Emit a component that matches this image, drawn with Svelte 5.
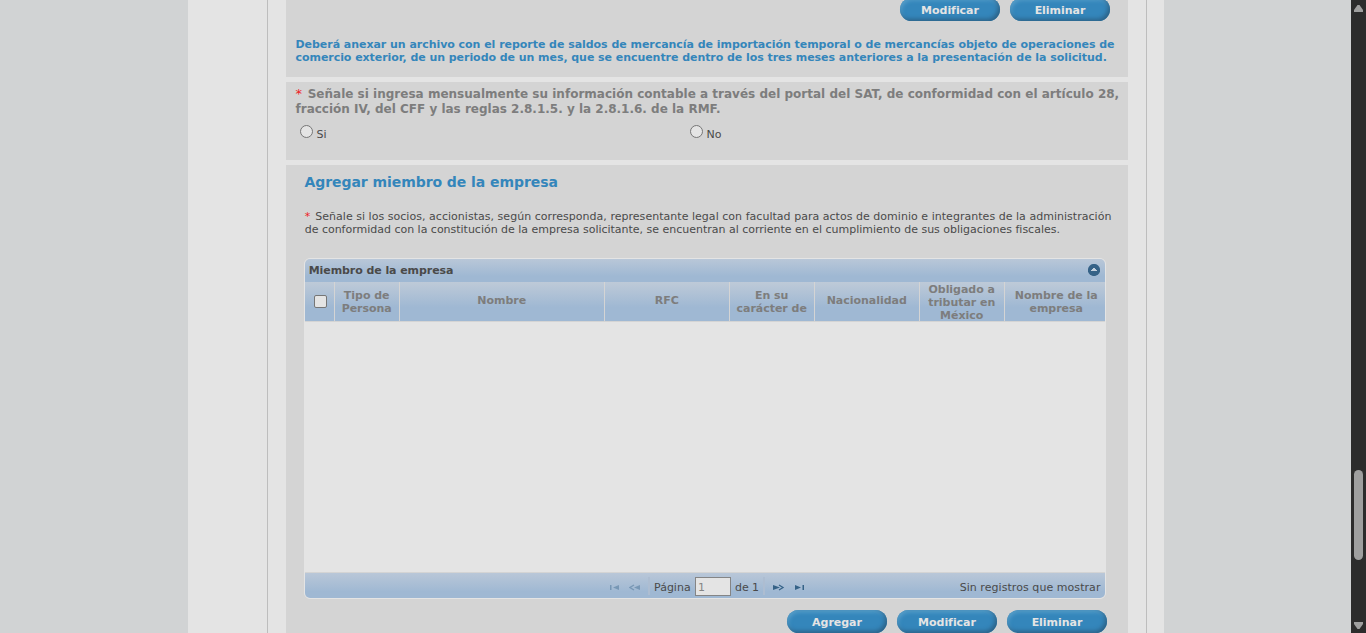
<script>
  const columns = [
    { width: 65, lines: ['Tipo de', 'Persona'] },
    { width: 205, lines: ['Nombre'] },
    { width: 125, lines: ['RFC'] },
    { width: 85, lines: ['En su', 'carácter de'] },
    { width: 105, lines: ['Nacionalidad'] },
    { width: 85, lines: ['Obligado a', 'tributar en', 'México'] },
    { width: 101, lines: ['Nombre de la', 'empresa'] }
  ];
  let choice = $state('');
  let pageNumber = $state('1');
</script>

<div class="screen">
  <div class="sheet">
    <main>
      <section class="panel report">
        <div class="actions">
          <button>Modificar</button>
          <button>Eliminar</button>
        </div>
        <p class="note">
          <span class="n1">Deberá anexar un archivo con el reporte de saldos de mercancía de importación temporal o de mercancías objeto de operaciones de</span>
          <span class="n2">comercio exterior, de un periodo de un mes, que se encuentre dentro de los tres meses anteriores a la presentación de la solicitud.</span>
        </p>
      </section>

      <section class="panel question">
        <p class="ask">
          <span class="q1"><i>*</i> Señale si ingresa mensualmente su información contable a través del portal del SAT, de conformidad con el artículo 28,</span>
          <span class="q2">fracción IV, del CFF y las reglas 2.8.1.5. y la 2.8.1.6. de la RMF.</span>
        </p>
        <div class="options">
          <label><input type="radio" name="sat" value="si" bind:group={choice} /><span>Si</span></label>
          <label><input type="radio" name="sat" value="no" bind:group={choice} /><span>No</span></label>
        </div>
      </section>

      <section class="panel members">
        <h2>Agregar miembro de la empresa</h2>
        <p class="intro">
          <span class="i1"><i>*</i> Señale si los socios, accionistas, según corresponda, representante legal con facultad para actos de dominio e integrantes de la administración</span>
          <span class="i2">de conformidad con la constitución de la empresa solicitante, se encuentran al corriente en el cumplimiento de sus obligaciones fiscales.</span>
        </p>
        <div class="grid">
          <div class="caption">
            <span>Miembro de la empresa</span>
            <svg width="12" height="12" viewBox="0 0 12 12"><circle cx="6" cy="6" r="6.1" fill="#356287" /><path d="M3 7h6v-1h-1v-1h-1v-1h-2v1h-1v1h-1z" fill="#c3d0dd" /></svg>
          </div>
          <div class="head">
            <div class="cell check"><input type="checkbox" /></div>
            {#each columns as col}
              <div class="cell" class:single={col.lines.length === 1} class:triple={col.lines.length === 3} style:width="{col.width}px">
                {#each col.lines as line}<span>{line}</span>{/each}
              </div>
            {/each}
          </div>
          <div class="rows"></div>
          <div class="pager">
            <div class="nav">
              <svg class="off" width="10" height="7" viewBox="0 0 10 7"><path d="M0 1h1.5v5h-1.5zM9 1v5L3 3.5z" /></svg>
              <svg class="off second" width="12" height="7" viewBox="0 0 12 7"><path d="M11 1v5L5 3.5z" /><path d="M5 1L1 3.5L5 6" class="line" /></svg>
              <b></b>
              <span class="word">Página</span>
              <input type="text" bind:value={pageNumber} />
              <span class="of">de 1</span>
              <b class="after"></b>
              <svg class="next" width="12" height="7" viewBox="0 0 12 7"><path d="M0 1v5L7 3.5z" /><path d="M6 1L10 3.5L6 6" class="line" /></svg>
              <svg class="last" width="10" height="7" viewBox="0 0 10 7"><path d="M0 1v5L6 3.5zM7.5 1h1.5v5h-1.5z" /></svg>
            </div>
            <span class="empty">Sin registros que mostrar</span>
          </div>
        </div>
        <div class="actions lower">
          <button>Agregar</button>
          <button>Modificar</button>
          <button>Eliminar</button>
        </div>
      </section>
    </main>
  </div>
  <div class="scroll">
    <svg width="9" height="7" viewBox="0 0 9 7"><path d="M3.5 0h2L9 5v2H0V5z" /></svg>
    <div class="thumb"></div>
    <svg width="9" height="7" viewBox="0 0 9 7"><path d="M0 0h9v2L5.5 7h-2L0 2z" /></svg>
  </div>
</div>

<style>
  :global(body) { margin: 0; overflow: hidden; }
  .screen {
    display: flex; width: 1366px; height: 633px; overflow: hidden; box-sizing: border-box;
    padding-left: 188px; background: #d1d3d4; color: #4a4a4a;
    font: 11px/13px Verdana, "DejaVu Sans", sans-serif;
  }
  .sheet { width: 976px; padding: 0 17px 0 79px; box-sizing: border-box; background: #e4e4e4; flex: none; }
  main { display: flex; flex-direction: column; gap: 5px; height: 633px; box-sizing: border-box; padding: 0 18px; border: solid #bdbdbd; border-width: 0 1px; }
  .panel { background: #d4d4d4; box-sizing: border-box; width: 842px; flex: none; overflow: hidden; }
  p, h2 { margin: 0; }
  p span { display: block; white-space: nowrap; }
  i { color: #ee1c25; font-style: normal; }
  .report { height: 77px; }
  .actions { display: flex; justify-content: flex-end; gap: 10px; margin: -2px 18px 0 0; }
  button {
    width: 100px; height: 23px; border: 0; padding: 2px 0 0; border-radius: 12px; color: #e4e4e4;
    font: bold 11px/21px Verdana, "DejaVu Sans", sans-serif; letter-spacing: -0.03px;
    background: #3486bb;
    box-shadow: inset -2px -2px 4px #2b6186, inset 1px 2px 4px #5da3cd;
  }
  .note { padding: 17px 0 0 9.5px; color: #3486bb; font-weight: bold; }
  .n1 { letter-spacing: -0.04px; }
  .n2 { letter-spacing: -0.052px; }
  .question { height: 78px; padding: 5px 0 0 9.5px; }
  .ask { font-size: 12px; line-height: 15px; font-weight: bold; color: #7d7d7d; }
  .q1 { letter-spacing: 0.01px; }
  .ask i { font-weight: normal; margin-right: 1.5px; font-size: 13px; line-height: 0; }
  .options { display: flex; padding: 8px 0 0 4.5px; }
  label { display: flex; width: 390px; }
  label span { padding: 3px 0 0 3.5px; }
  input[type='radio'] { appearance: none; width: 13px; height: 13px; margin: 0; border: 1px solid #767676; border-radius: 50%; background: #e4e4e4; box-sizing: border-box; }
  .members { height: 468px; padding-left: 18px; }
  h2 { font-size: 14px; line-height: 18px; padding: 8px 0 0 0.5px; color: #3486bb; white-space: nowrap; letter-spacing: -0.065px; }
  .intro { padding: 19px 0 0 0.7px; }
  .intro i { margin-right: 1.5px; }
  .i1 { letter-spacing: 0.031px; }
  .i2 { letter-spacing: -0.013px; }
  .grid { width: 802px; height: 341px; margin-top: 22px; box-sizing: border-box; border: 1px solid #e4e4e4; border-radius: 6px; overflow: hidden; display: flex; flex-direction: column; background: #e4e4e4; }
  .caption { height: 23px; box-sizing: border-box; display: flex; justify-content: space-between; align-items: center; padding: 0 5px 1px 3.7px; font-weight: bold; letter-spacing: -0.07px; background: linear-gradient(#b9c7d8, #9fb8d3 75%); flex: none; }
  .head { display: flex; height: 39px; flex: none; background: linear-gradient(#becad8, #9fb8d3 65%); border-bottom: 1px solid #d4d4d4; }
  .cell { display: flex; flex-direction: column; align-items: center; justify-content: center; box-sizing: border-box; border-right: 1px solid #d4d4d4; color: #7d7d7d; font-weight: bold; white-space: nowrap; flex: none; letter-spacing: -0.03px; padding-right: 0.6px; }
  .cell:last-child { border: 0; padding-left: 2px; }
  .single { padding-bottom: 2px; }
  .triple { padding-top: 1px; }
  .cell.check { width: 30px; padding: 0 0 0 1px; }
  input[type='checkbox'] { appearance: none; box-sizing: border-box; width: 13px; height: 13px; margin: 0; border: 1px solid #767676; border-radius: 2px; background: #e4e4e4; }
  .rows { flex: 1; }
  .pager { height: 26px; box-sizing: border-box; border-top: 1px solid #d4d4d4; display: flex; align-items: center; justify-content: space-between; padding: 1px 4.5px 0 305px; background: linear-gradient(#b9c7d8, #9fb8d3 75%); flex: none; }
  .nav { display: flex; align-items: center; }
  .nav svg { fill: #356287; display: block; margin-top: 2px; }
  .nav svg .line { fill: none; stroke: #356287; stroke-width: 1.3; }
  .nav .off { opacity: .4; }
  .nav .second { margin-left: 9px; }
  .nav b { width: 2px; height: 18px; background: #adbdd1; margin: 0 4px 0 7px; }
  .nav span, .empty { padding-top: 2px; }
  .empty { letter-spacing: 0.06px; }
  .nav .word { width: 41px; }
  .nav input { width: 36px; height: 19px; box-sizing: border-box; border: 1px solid #858585; outline: 0; background: #e4e4e4; padding: 3px 2px 1px; color: #858585; font: 11px Verdana, "DejaVu Sans", sans-serif; }
  .nav .of { padding-left: 4px; letter-spacing: -0.1px; }
  .nav b.after { margin: 0 8px 0 4.4px; }
  .nav .last { margin-left: 10px; }
  .lower { margin: 11px 21px 0 0; }
  .scroll { width: 15px; margin-left: 187px; background: #2c2c2c; display: flex; flex-direction: column; align-items: center; flex: none; box-sizing: border-box; padding: 5px 0 4px; }
  .scroll svg { fill: #9f9f9f; flex: none; }
  .thumb { width: 9px; height: 90px; border-radius: 5px; background: #9f9f9f; margin: 458px 0 62px; flex: none; }
</style>
